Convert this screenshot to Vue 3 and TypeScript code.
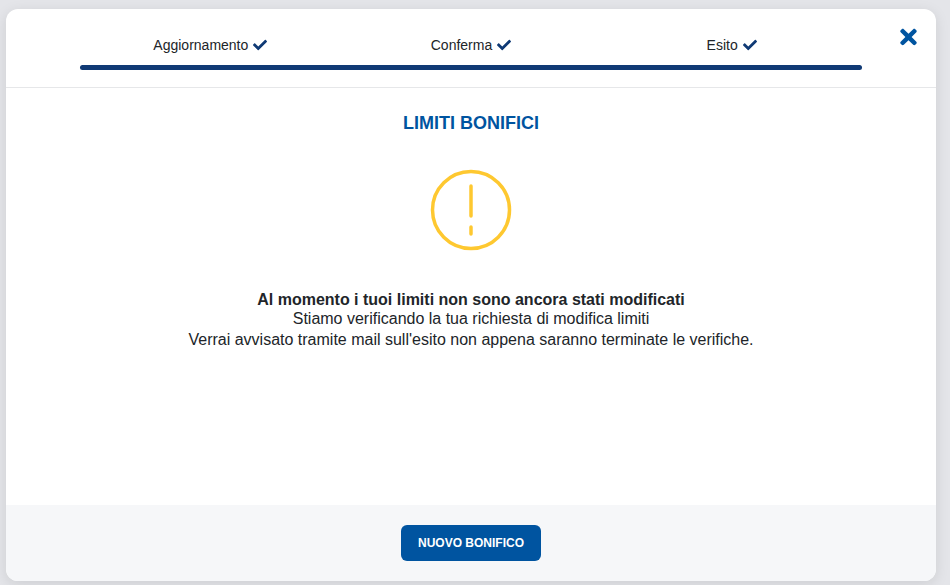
<script setup lang="ts">
const steps = ["Aggiornamento", "Conferma", "Esito"]
const checkPath =
  "M173.898 439.404l-166.4-166.4c-9.997-9.997-9.997-26.206 0-36.204l36.203-36.204c9.997-9.998 26.207-9.998 36.204 0L192 312.69 432.095 72.596c9.997-9.997 26.207-9.997 36.204 0l36.203 36.204c9.997 9.997 9.997 26.206 0 36.204l-294.4 294.401c-9.998 9.997-26.207 9.997-36.204-.001z"
</script>

<template>
  <div class="page">
    <div class="modal">
      <header class="head">
        <div class="steps">
          <div v-for="step in steps" :key="step" class="step">
            {{ step }}
            <svg class="check" viewBox="0 0 512 512" aria-hidden="true">
              <path :d="checkPath" />
            </svg>
          </div>
        </div>
        <div class="bar"></div>
        <button class="close" aria-label="Chiudi">
          <svg viewBox="0 0 352 512" aria-hidden="true">
            <path d="M242.72 256l100.07-100.07c12.28-12.28 12.28-32.19 0-44.48l-22.24-22.24c-12.28-12.28-32.19-12.28-44.48 0L176 189.28 75.93 89.21c-12.28-12.28-32.19-12.28-44.48 0L9.21 111.45c-12.28 12.28-12.28 32.19 0 44.48L109.28 256 9.21 356.07c-12.28 12.28-12.28 32.19 0 44.48l22.24 22.24c12.28 12.28 32.2 12.28 44.48 0L176 322.72l100.07 100.07c12.28 12.28 32.2 12.28 44.48 0l22.24-22.24c12.28-12.28 12.28-32.19 0-44.48L242.72 256z" />
          </svg>
        </button>
      </header>

      <main class="content">
        <h1 class="title">LIMITI BONIFICI</h1>
        <svg class="warn" viewBox="0 0 82 82" aria-hidden="true">
          <circle cx="41" cy="41" r="38.5" />
          <line x1="41" y1="17" x2="41" y2="47" />
          <line x1="41" y1="58" x2="41" y2="65" />
        </svg>
        <div class="message">
          <strong>Al momento i tuoi limiti non sono ancora stati modificati</strong>
          <p>Stiamo verificando la tua richiesta di modifica limiti</p>
          <p class="last">Verrai avvisato tramite mail sull'esito non appena saranno terminate le verifiche.</p>
        </div>
      </main>

      <footer class="foot">
        <button class="primary">NUOVO BONIFICO</button>
      </footer>
    </div>
  </div>
</template>

<style>
body {
  margin: 0;
  background: #e4e5e9;
}
</style>

<style scoped>
.page {
  width: 950px;
  height: 585px;
  box-sizing: border-box;
  padding: 9px 14px 4px 6px;
  overflow: hidden;
  font-family: "Liberation Sans", Arial, sans-serif;
  color: #212529;
}

.modal {
  position: relative;
  height: 572px;
  display: flex;
  flex-direction: column;
  background: #fff;
  border-radius: 12px;
  overflow: hidden;
  box-shadow: 0 3px 14px rgba(0, 0, 0, 0.1);
}

.head {
  height: 79px;
  box-sizing: border-box;
  padding: 25px 74px 0;
  border-bottom: 1px solid #e6e7e9;
}

.steps {
  display: grid;
  grid-template-columns: repeat(3, 1fr);
  height: 22px;
}

.step {
  display: flex;
  justify-content: center;
  align-items: center;
  gap: 5px;
  font-size: 14px;
}

.check {
  width: 14px;
  height: 14px;
  fill: #103a75;
}

.bar {
  height: 5px;
  margin-top: 9px;
  border-radius: 3px;
  background: #103a75;
}

.close {
  position: absolute;
  top: 16px;
  right: 19px;
  width: 17px;
  height: 24px;
  padding: 0;
  border: 0;
  background: none;
  cursor: pointer;
}

.close svg {
  display: block;
  width: 17px;
  height: 24px;
  fill: #0054a0;
}

.content {
  flex: 1;
  display: flex;
  flex-direction: column;
  align-items: center;
}

.title {
  margin: 26px 0 0;
  font-size: 18px;
  line-height: 19px;
  font-weight: 700;
  color: #0054a0;
}

.warn {
  display: block;
  width: 82px;
  height: 82px;
  margin-top: 36px;
  fill: none;
  stroke: #fec830;
  stroke-width: 3.5;
  stroke-linecap: round;
}

.message {
  margin-top: 39px;
  font-size: 16px;
  line-height: 20px;
  text-align: center;
}

.message strong {
  display: block;
  height: 19px;
}

.message p {
  margin: 0;
  height: 21px;
}

.message .last {
  height: 20px;
}

.foot {
  height: 76px;
  display: flex;
  justify-content: center;
  align-items: center;
  background: #f6f7f9;
}

.primary {
  width: 140px;
  height: 36px;
  padding: 0;
  border: 0;
  border-radius: 6px;
  background: #0054a0;
  color: #fff;
  font-family: inherit;
  font-size: 12px;
  font-weight: 700;
  cursor: pointer;
}
</style>
